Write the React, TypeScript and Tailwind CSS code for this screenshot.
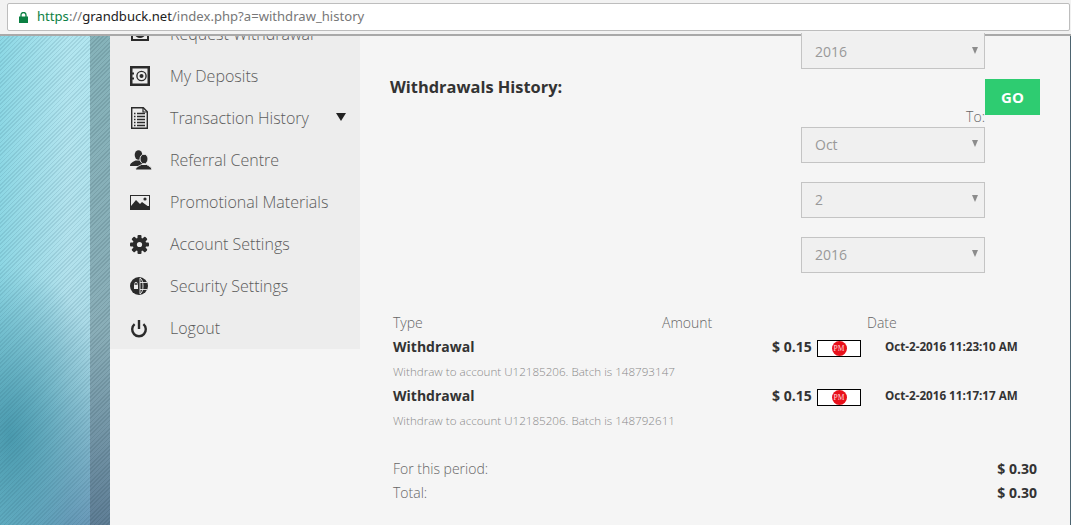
import React from "react";

const ink = "#2b2b2b";

function IconCash() {
  return (
    <svg width="20" height="16" viewBox="0 0 20 16">
      <rect x="1" y="1" width="18" height="14" fill={ink} />
      <rect x="3" y="3" width="14" height="10" fill="#ededed" />
      <ellipse cx="10" cy="8" rx="5" ry="4" fill={ink} />
      <rect x="4" y="7" width="2" height="2" fill={ink} />
      <rect x="14" y="7" width="2" height="2" fill={ink} />
    </svg>
  );
}
function IconSafe() {
  return (
    <svg width="20" height="20" viewBox="0 0 20 20">
      <path fillRule="evenodd" fill={ink} d="M0 0h20v20H0zM2.5 2.5v4h1.5v2H2.5v3h1.5v2H2.5v4h15v-15z" />
      <circle cx="11.5" cy="10" r="4.6" fill="none" stroke={ink} strokeWidth="1.4" />
      <circle cx="11.5" cy="10" r="2" fill={ink} />
    </svg>
  );
}
function IconList() {
  return (
    <svg width="17" height="22" viewBox="0 0 17 22" className="ml-[1px]">
      <path d="M.7.7h11.6l4 4v16.6H.7z" fill="#ededed" stroke={ink} strokeWidth="1.4" />
      <path d="M12 1v4h4" fill="none" stroke={ink} strokeWidth="1.2" />
      <path d="M6 6.5h8M6 9.5h8M6 12.5h8M6 15.5h8M6 18.5h8" stroke={ink} strokeWidth="1.5" />
      <path d="M3 6.5h1.5M3 9.5h1.5M3 12.5h1.5M3 15.5h1.5M3 18.5h1.5" stroke={ink} strokeWidth="1.5" />
    </svg>
  );
}
function IconUsers() {
  return (
    <svg width="22" height="20" viewBox="0 0 22 20">
      <ellipse cx="8.5" cy="5" rx="3.8" ry="4.8" fill={ink} />
      <path d="M0 16c0-3 3-4 5.5-5.5h6L16 13v3z" fill={ink} />
      <ellipse cx="14" cy="9" rx="4" ry="4.8" fill={ink} stroke="#ededed" strokeWidth="1" />
      <path d="M5.5 20c0-3 3.5-4 6-5.500h5c2.500 1.500 5.500 2.500 5.500 5.500z" fill={ink} stroke="#ededed" strokeWidth="1" />
    </svg>
  );
}
function IconImage() {
  return (
    <svg width="20" height="15" viewBox="0 0 20 15">
      <rect width="20" height="15" fill={ink} />
      <rect x="1" y="1" width="18" height="10" fill="#ededed" />
      <path d="M1 11 6 5l4 4 2-2 7 5v3H1z" fill={ink} />
      <circle cx="15" cy="4" r="1.6" fill={ink} />
    </svg>
  );
}
function IconGear() {
  return (
    <svg width="19" height="19" viewBox="0 0 19 19">
      <g fill={ink}>
        <circle cx="9.5" cy="9.5" r="6.8" />
        <rect x="7.5" y="0" width="4" height="19" rx="1" />
        <rect x="7.5" y="0" width="4" height="19" rx="1" transform="rotate(45 9.5 9.5)" />
        <rect x="7.5" y="0" width="4" height="19" rx="1" transform="rotate(90 9.5 9.5)" />
        <rect x="7.5" y="0" width="4" height="19" rx="1" transform="rotate(135 9.5 9.5)" />
      </g>
      <circle cx="9.5" cy="9.5" r="2.6" fill="#ededed" />
    </svg>
  );
}
function IconGlobe() {
  return (
    <svg width="18" height="18" viewBox="0 0 18 18">
      <circle cx="9" cy="9" r="9" fill={ink} />
      <path d="M10 1v16M10 5.500h7M10 12.500h7" stroke="#ededed" strokeWidth="0.9" />
      <path d="M10 1c4 2 4 14 0 16" fill="none" stroke="#ededed" strokeWidth="0.9" />
      <rect x="4" y="8" width="4" height="4" fill="#ededed" />
      <path d="M4.800 8V6.500a1.200 1.200 0 0 1 2.400 0V8" fill="none" stroke="#ededed" strokeWidth="0.9" />
    </svg>
  );
}
function IconPower() {
  return (
    <svg width="18" height="19" viewBox="0 0 18 19" fill="none" stroke={ink} strokeWidth="2.4">
      <path d="M9 1v9" />
      <path d="M4.600 5.200a6.800 6.800 0 1 0 8.800 0" />
    </svg>
  );
}

const nav = [
  { label: "Request Withdrawal", icon: <IconCash /> },
  { label: "My Deposits", icon: <IconSafe /> },
  { label: "Transaction History", icon: <IconList />, caret: true },
  { label: "Referral Centre", icon: <IconUsers /> },
  { label: "Promotional Materials", icon: <IconImage /> },
  { label: "Account Settings", icon: <IconGear /> },
  { label: "Security Settings", icon: <IconGlobe /> },
  { label: "Logout", icon: <IconPower /> },
];

function Select({ value, className = "" }: { value: string; className?: string }) {
  return (
    <div className={`flex h-9 w-[184px] items-center justify-between border border-[#c4c4c4] bg-[#f0f0f0] pl-[13px] pr-[6px] text-sm text-[#999] ${className}`}>
      <span>{value}</span>
      <svg width="6" height="7" viewBox="0 0 6 7" className="-mt-[3px]"><path d="M0 0h6L3 7z" fill="#8c8c8c" /></svg>
    </div>
  );
}

function Badge() {
  return (
    <div className="mt-[3px] flex h-[17px] w-11 items-center justify-center border border-black bg-white">
      <div className="flex h-[15px] w-[15px] items-center justify-center overflow-hidden rounded-full bg-[#e8111b] font-['Liberation_Serif',serif] text-[7.5px] leading-[15px] text-[#ffd9d9]">PM</div>
    </div>
  );
}

function Row({ amount, date, note }: { amount: string; date: string; note: string }) {
  return (
    <div className="h-[49px]">
      <div className="flex h-6 items-center">
        <div className="w-[379px] text-sm font-bold text-[#333]">Withdrawal</div>
        <div className="w-[45px] text-sm font-bold text-[#333]">{amount}</div>
        <Badge />
        <div className="ml-6 text-[11.65px] font-bold text-[#333]">{date}</div>
      </div>
      <div className="mt-[3px] text-[11.63px] font-light leading-5 text-[#8a8a8a]">{note}</div>
    </div>
  );
}

export default function App() {
  return (
    <div className="flex h-[525px] w-[1071px] flex-col overflow-hidden bg-[#f5f5f5] font-['Open_Sans',sans-serif]">
      <div className="h-9 shrink-0 border-b-2 border-[#a9a9a9] bg-[#f2f2f2] pl-[7px] pr-[1px] pt-[3px]">
        <div className="flex h-[28px] items-center rounded-[2px] border border-[#bdbdbd] bg-white pl-[11px] font-['Noto_Sans',sans-serif] text-[13.1px]">
          <svg width="9" height="11" viewBox="0 0 9 11" className="mr-[9px]">
            <path d="M0 4.500h9V11H0z" fill="#0b8043" />
            <path d="M2 5V3a2.500 2.500 0 0 1 5 0v2" fill="none" stroke="#0b8043" strokeWidth="1.3" />
          </svg>
          <span className="text-[#0b8043]">https</span>
          <span className="text-[#777]">://</span>
          <span className="text-[#222]">grandbuck.net</span>
          <span className="text-[#777]">/index.php?a=withdraw_history</span>
        </div>
      </div>

      <div className="flex min-h-0 flex-1">
        <div className="w-[90px] shrink-0 [background-image:repeating-linear-gradient(135deg,rgba(40,90,110,0.13)_0,rgba(40,90,110,0.13)_1.2px,transparent_1.2px,transparent_3px),radial-gradient(ellipse_100px_170px_at_10px_400px,#4a9aae_0%,rgba(79,159,178,0.5)_50%,rgba(79,159,178,0)_100%),linear-gradient(90deg,rgba(110,205,220,0.55),rgba(110,205,220,0)_75%),linear-gradient(180deg,#b2e6f0_0%,#b2e1ec_50%,#a0cfde_72%,#6b98b8_100%)]" />
        <div className="w-5 shrink-0 [background-image:repeating-linear-gradient(135deg,rgba(30,60,70,0.14)_0,rgba(30,60,70,0.14)_1.2px,transparent_1.2px,transparent_3px),linear-gradient(180deg,#86b3ba_0%,#8aaeb8_60%,#5f7e96_100%)]" />

        <div className="h-[313px] w-[250px] shrink-0 overflow-hidden bg-[#ededed]">
          <div className="-mt-[23px]">
            {nav.map((n) => (
              <div key={n.label} className="flex h-[42px] items-center">
                <div className="flex w-[60px] pl-5">{n.icon}</div>
                <div className="text-base font-light text-[#5c5c5c]">{n.label}</div>
                {n.caret && (
                  <svg width="10" height="8" viewBox="0 0 10 8" className="ml-[27px] -mt-[2px]">
                    <path d="M0 0h10L5 8z" fill="#222" />
                  </svg>
                )}
              </div>
            ))}
          </div>
        </div>

        <div className="min-w-0 flex-1 border-r border-[#4d6470]">
          <div className="flex">
            <div className="w-[441px] pl-[30px] pt-[39px] text-[16.4px] font-bold text-[#333]">Withdrawals History:</div>
            <div className="w-[184px]">
              <Select value="2016" className="-mt-[3px] border-t-0 pt-[2px]" />
              <div className="mt-[38px] h-5 text-right text-sm font-light leading-5 text-[#666]">To:</div>
              <Select value="Oct" />
              <Select value="2" className="mt-[19px]" />
              <Select value="2016" className="mt-[19px]" />
            </div>
            <div className="mt-[43px] flex h-9 w-[55px] items-center justify-center bg-[#2ecc71] text-[15px] font-bold text-white">GO</div>
          </div>

          <div className="mt-[40px] pl-[33px] pr-[33px]">
            <div className="mb-[2px] flex h-5 items-center text-sm font-light leading-5 text-[#666]">
              <div className="w-[269px]">Type</div>
              <div className="w-[205px]">Amount</div>
              <div>Date</div>
            </div>
            <Row amount="$ 0.15" date="Oct-2-2016 11:23:10 AM" note="Withdraw to account U12185206. Batch is 148793147" />
            <Row amount="$ 0.15" date="Oct-2-2016 11:17:17 AM" note="Withdraw to account U12185206. Batch is 148792611" />
            <div className="mt-[24px] flex h-6 items-center justify-between text-sm">
              <span className="font-light text-[#666]">For this period:</span>
              <span className="font-bold text-[#333]">$ 0.30</span>
            </div>
            <div className="flex h-6 items-center justify-between text-sm">
              <span className="font-light text-[#666]">Total:</span>
              <span className="font-bold text-[#333]">$ 0.30</span>
            </div>
          </div>
        </div>
      </div>
    </div>
  );
}
